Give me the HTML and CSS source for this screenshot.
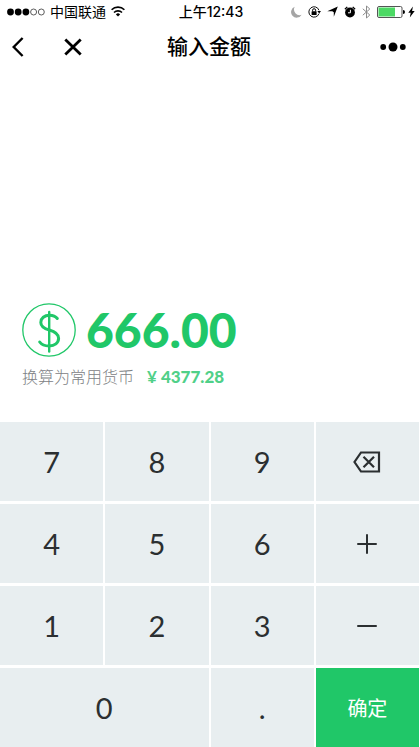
FILE: index.html
```html
<!DOCTYPE html>
<html lang="zh-CN">
<head>
<meta charset="utf-8">
<meta name="viewport" content="width=device-width, initial-scale=1">
<title>输入金额</title>
<link rel="stylesheet" href="styles.css">
</head>
<body>
<div class="app">
  <div class="status">
    <div class="status-left">
      <svg width="38" height="8" viewBox="0 0 38 8"><g fill="#000"><circle cx="3.5" cy="4" r="3.4"/><circle cx="11.2" cy="4" r="3.4"/><circle cx="18.9" cy="4" r="3.4"/></g><g fill="none" stroke="#333" stroke-width=".8"><circle cx="26.6" cy="4" r="3"/><circle cx="34.3" cy="4" r="3"/></g></svg>
      <span>中国联通</span>
      <svg class="wifi" width="14" height="11" viewBox="0 0 14 11"><g fill="none" stroke="#000" stroke-width="1.6"><path d="M.6 3.800a9 9 0 0 1 12.800 0"/><path d="M3 6.500a5.700 5.700 0 0 1 8 0"/></g><path d="M4.900 8.400a3 3 0 0 1 4.200 0L7 10.600z"/></svg>
    </div>
    <time class="clock">上午12:43</time>
    <div class="status-right">
      <svg width="11" height="12" viewBox="0 0 11 12"><path d="M3.700.8A5.600 5.600 0 1 0 10.600 8.700 5.600 5.600 0 0 1 3.700.8z" fill="#a5a5a5"/></svg>
      <svg width="13" height="12" viewBox="0 0 13 12"><path d="M11 7.600A5.200 5.200 0 1 1 11 4.300" fill="none" stroke="#111" stroke-width="1"/><path d="M9.300 5h3.700l-1.800 2.400z"/><rect x="3.600" y="5.200" width="5" height="3.700" rx=".5"/><path d="M4.600 5.400V4.200a1.500 1.500 0 0 1 3 0v1.200" fill="none" stroke="#000"/></svg>
      <svg width="11" height="11" viewBox="0 0 11 11"><path d="M10.800.4 6.800 10.800V6.300L5.300 5.200H.3z"/></svg>
      <svg width="12" height="12" viewBox="0 0 12 12"><circle cx="6" cy="6.500" r="4.900"/><path d="M.9 3.300 3.300.9M8.700.9l2.400 2.400" stroke="#000" stroke-width="1.300"/><path d="M6.400 3.800v3H4" fill="none" stroke="#fff"/></svg>
      <svg width="9" height="14" viewBox="0 0 9 14"><path d="M.8 3.800 7.800 10 4.500 13V1l3.300 3-7 6.200" fill="none" stroke="#8c8c8c" stroke-width="1"/></svg>
      <svg width="28" height="12" viewBox="0 0 28 12"><rect x=".5" y=".5" width="24.500" height="11" rx="1.500" fill="#fff" stroke="#555"/><rect x="1.500" y="1.500" width="16.500" height="9" fill="#4cd964"/><path d="M26 4a2 2 0 0 1 0 4z"/></svg>
      <svg class="bolt" width="7" height="12" viewBox="0 0 7 12"><path d="M4.900.5.3 6.700h2.400L1.800 11.500 6.700 4.900H4.100z"/></svg>
    </div>
  </div>

  <header class="nav">
    <div class="nav-left">
      <button type="button" class="icon-btn" aria-label="返回"><svg width="12" height="20" viewBox="0 0 12 20"><path d="M10.600 1 1.700 10l8.900 9" fill="none" stroke="#000" stroke-width="2.400"/></svg></button>
      <button type="button" class="icon-btn" aria-label="关闭"><svg width="18" height="18" viewBox="0 0 18 18"><path d="m1.300 1.500 15.400 15M16.700 1.500l-15.400 15" stroke="#000" stroke-width="2.800"/></svg></button>
    </div>
    <h1 class="title">输入金额</h1>
    <button type="button" class="icon-btn more" aria-label="更多"><svg width="26" height="10" viewBox="0 0 26 10"><circle cx="3.200" cy="5" r="2.900"/><circle cx="13" cy="5" r="4.500"/><circle cx="22.800" cy="5" r="2.900"/></svg></button>
  </header>

  <main class="summary">
    <div class="amount">
      <svg width="54" height="54" viewBox="0 0 54 54" fill="none" stroke="#20c768"><circle cx="27" cy="27" r="26.200" stroke-width="1.300"/><g stroke-width="3" stroke-linecap="round"><path d="M27.200 9v39.500" stroke-width="2.400"/><path d="M35.300 15.500C33.500 13.200 31 12.200 27.500 12.200c-5 0-8.700 3-8.700 7.200 0 4.500 3.700 6.200 8.500 7.600 5.500 1.600 9.300 3.500 9.300 8.300 0 4.600-4 7.700-9.400 7.700-4.200 0-7.600-1.300-9.500-4"/></g></svg>
      <output class="value">666.00</output>
    </div>
    <p class="converted"><span class="label">换算为常用货币</span><span class="yen">¥</span><span class="sum">4377.28</span></p>
  </main>

  <div class="keypad">
    <button type="button" class="key">7</button>
    <button type="button" class="key">8</button>
    <button type="button" class="key">9</button>
    <button type="button" class="key" aria-label="删除"><svg width="28" height="22" viewBox="0 0 28 22" fill="none" stroke="#2b2f31" stroke-width="2.200"><path d="M8 1.500h18v19H8L1.500 11z"/><path d="m10.500 5.700 10.500 10.600M21 5.700 10.500 16.300"/></svg></button>
    <button type="button" class="key">4</button>
    <button type="button" class="key">5</button>
    <button type="button" class="key">6</button>
    <button type="button" class="key" aria-label="加"><svg width="20" height="20" viewBox="0 0 20 20"><path d="M10 1v18M1 10h18" stroke="#2b2f31" stroke-width="2" stroke-linecap="round"/></svg></button>
    <button type="button" class="key">1</button>
    <button type="button" class="key">2</button>
    <button type="button" class="key">3</button>
    <button type="button" class="key" aria-label="减"><svg width="20" height="20" viewBox="0 0 20 20"><path d="M1 10h18" stroke="#2b2f31" stroke-width="2" stroke-linecap="round"/></svg></button>
    <button type="button" class="key wide">0</button>
    <button type="button" class="key">.</button>
    <button type="button" class="key confirm">确定</button>
  </div>
</div>
</body>
</html>
```
FILE: styles.css
```css
* {
  box-sizing: border-box;
}

body {
  margin: 0;
  background: #fff;
  color: #000;
  font-family: Inter, "Noto Sans CJK SC", sans-serif;
}

svg {
  display: block;
  flex: none;
}

button {
  margin: 0;
  padding: 0;
  border: 0;
  background: none;
  color: inherit;
  font: inherit;
}

.app {
  display: flex;
  flex-direction: column;
  min-height: 100vh;
}

.status {
  display: grid;
  grid-template-columns: 1fr auto 1fr;
  align-items: center;
  height: 23px;
  padding: 0 5px 0 7px;
  font-size: 14px;
  line-height: 23px;
}

.status-left,
.status-right {
  display: flex;
  align-items: center;
}

.status-left {
  gap: 5px;
}

.status-right {
  justify-content: flex-end;
  gap: 6px;
}

.bolt {
  margin-left: -3px;
}

.clock {
  font-weight: 500;
}

.nav {
  display: grid;
  grid-template-columns: 1fr auto 1fr;
  align-items: center;
  height: 48px;
  padding: 0 14px 0 12px;
}

.nav-left {
  display: flex;
  align-items: center;
  gap: 40px;
}

.title {
  margin: 0;
  font-size: 21px;
  font-weight: 500;
  line-height: 32px;
}

.more {
  justify-self: end;
}

.summary {
  display: flex;
  flex: 1;
  flex-direction: column;
  justify-content: flex-end;
  padding: 0 22px 33px;
}

.amount {
  display: flex;
  align-items: center;
  gap: 10px;
  color: #20c768;
}

.value {
  font-family: Lato, sans-serif;
  font-size: 48px;
  font-weight: 900;
  line-height: 54px;
}

.converted {
  display: flex;
  align-items: center;
  margin: 8px 0 0;
  font-size: 16px;
  line-height: 24px;
}

.label {
  margin-right: 13px;
  color: #7d8184;
  font-weight: 300;
}

.yen,
.sum {
  color: #50d088;
  font-family: Lato, sans-serif;
  font-size: 17px;
  font-weight: 700;
}

.sum {
  margin-left: 4px;
  font-weight: 900;
}

.keypad {
  display: grid;
  grid-template-columns: repeat(4, 1fr);
  grid-auto-rows: 79px;
  gap: 3px 2px;
  padding-right: 1px;
}

.key {
  display: flex;
  align-items: center;
  justify-content: center;
  background: #e8eef0;
  color: #2b2f31;
  font-family: Lato, "Noto Sans CJK SC", sans-serif;
  font-size: 29px;
}

.wide {
  grid-column: span 2;
}

.confirm {
  background: #20c768;
  color: #fff;
  font-size: 20px;
}
```
